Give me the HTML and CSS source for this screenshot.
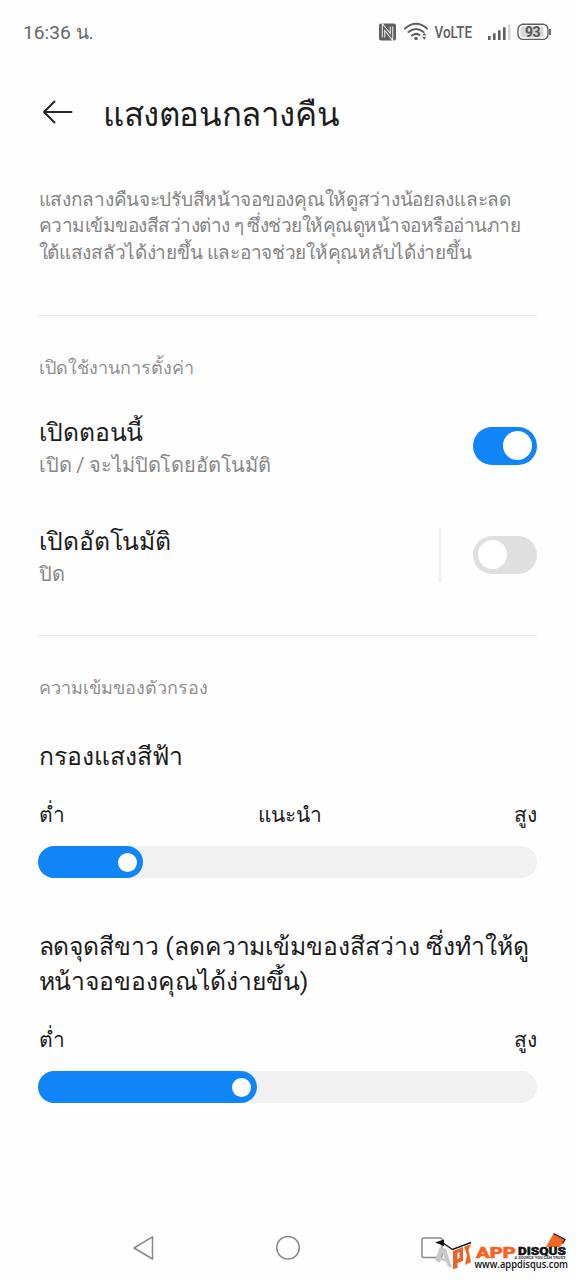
FILE: index.html
```
<!DOCTYPE html>
<html lang="th">
<head>
<meta charset="utf-8">
<title>แสงตอนกลางคืน</title>
<link rel="stylesheet" href="styles.css">
</head>
<body>
<div class="status">
  <span class="clock">16:36 น.</span>
  <svg class="status-icons" width="176" height="24" viewBox="0 0 176 24">
    <rect x="3" y="3.500" width="17" height="17" rx="2" fill="#606060"/>
    <path d="M7.500 17.500V7L15.500 17V6.500" fill="none" stroke="#fff" stroke-width="3.400"/>
    <path d="M7.500 18.500V7L15.500 17V5.500" fill="none" stroke="#606060" stroke-width="1.600"/>
    <g fill="none" stroke="#606060" stroke-width="2" stroke-linecap="round">
      <path d="M29 8.500Q40 -1 51 8.500M32.500 12Q40 6 47.500 12M36 15.500Q40 12.500 43.500 15"/>
    </g>
    <circle cx="40" cy="18.500" r="1.800" fill="#606060"/>
    <path d="M46.300 15.500L48.300 12.800L50.300 15.500ZM46.300 17L48.300 19.700L50.300 17Z" fill="#606060"/>
    <text class="volte" x="58.500" y="18" textLength="37.500" lengthAdjust="spacingAndGlyphs">VoLTE</text>
    <g fill="#606060"><rect x="112" y="16" width="2.600" height="4"/><rect x="117" y="13.300" width="2.600" height="6.700"/><rect x="122" y="10.300" width="2.600" height="9.700"/><rect x="127" y="7.300" width="2.600" height="12.700"/></g>
    <rect x="132" y="4.500" width="2.600" height="15.500" fill="#d4d4d4"/>
    <rect x="142" y="4.200" width="30" height="15.200" rx="5" fill="none" stroke="#606060" stroke-width="1.400"/>
    <rect x="144.500" y="6.500" width="23" height="10.600" rx="2" fill="#d6d6d6"/>
    <path d="M174 9v6" stroke="#606060" stroke-width="1.800"/>
    <text class="battery" x="149" y="16.800" textLength="15.500">93</text>
  </svg>
</div>
<header class="header">
  <svg width="32" height="26" viewBox="0 0 32 26" fill="none" stroke="#262626" stroke-width="2" stroke-linecap="round" stroke-linejoin="round"><path d="M29.500 12H2.500M12.500 1.500L2 12L12.500 22.500"/></svg>
  <h1>แสงตอนกลางคืน</h1>
</header>
<main>
  <p class="desc"><span>แสงกลางคืนจะปรับสีหน้าจอของคุณให้ดูสว่างน้อยลงและลด</span><span class="tight">ความเข้มของสีสว่างต่าง ๆ ซึ่งช่วยให้คุณดูหน้าจอหรืออ่านภาย</span><span>ใต้แสงสลัวได้ง่ายขึ้น และอาจช่วยให้คุณหลับได้ง่ายขึ้น</span></p>
  <section>
    <h2>เปิดใช้งานการตั้งค่า</h2>
    <div class="row">
      <div class="info"><h3>เปิดตอนนี้</h3><p>เปิด / จะไม่ปิดโดยอัตโนมัติ</p></div>
      <span class="toggle on"></span>
    </div>
    <div class="row">
      <div class="info"><h3>เปิดอัตโนมัติ</h3><p>ปิด</p></div>
      <span class="bar"></span>
      <span class="toggle"></span>
    </div>
  </section>
  <section class="filters">
    <h2>ความเข้มของตัวกรอง</h2>
    <h3 class="blue-title">กรองแสงสีฟ้า</h3>
    <div class="scale"><span>ต่ำ</span><span>แนะนำ</span><span>สูง</span></div>
    <div class="slider"><div class="fill" style="width:105px"></div></div>
    <h3 class="white-title">ลดจุดสีขาว (ลดความเข้มของสีสว่าง ซึ่งทำให้ดู<br>หน้าจอของคุณได้ง่ายขึ้น)</h3>
    <div class="scale"><span>ต่ำ</span><span>สูง</span></div>
    <div class="slider"><div class="fill" style="width:219px"></div></div>
  </section>
</main>
<nav class="nav">
  <svg width="576" height="60" viewBox="0 1220 576 60">
    <g fill="none" stroke="#888" stroke-width="1.500" stroke-linejoin="round">
      <path d="M134 1248L152.500 1236.800V1259Z"/>
      <circle cx="288" cy="1247.800" r="11.300"/>
      <rect x="422" y="1238" width="20" height="19.500" rx="2"/>
    </g>
    <path d="M435 1242.500L444 1239.500V1246Z" fill="#111"/>
    <path d="M443 1243L452.500 1249.500L471 1242.500" fill="none" stroke="#111" stroke-width="1.400"/>
    <path d="M440 1247L446 1249L452 1268L447.500 1266L446.500 1262L441 1260L439.500 1262.500L435 1260ZM442.500 1253L441 1257.500L445 1259Z" fill="#c8c8c8" fill-rule="evenodd"/>
    <path d="M453 1251L463 1247V1261L457.500 1263V1268L453 1269ZM457.500 1253V1259L459.500 1258V1252Z" fill="#e8642a" fill-rule="evenodd"/>
    <path d="M464 1247L471 1244L468.500 1250L471 1262L465 1265L467 1255Z" fill="#f26522"/>
    <path d="M553.500 1233.500L565 1239.500L560 1247H546Z" fill="#f26522"/>
    <path d="M553.500 1233.500L565 1239.500L562.500 1243.500" fill="none" stroke="#222" stroke-width="1.400"/>
    <text class="app" x="476" y="1257.500" textLength="40" lengthAdjust="spacingAndGlyphs">APP</text>
    <text class="disqus" x="518" y="1254.500" textLength="48" lengthAdjust="spacingAndGlyphs">DISQUS</text>
    <text class="tag" x="514.500" y="1258.800" textLength="51" lengthAdjust="spacingAndGlyphs">A SOURCE YOU CAN TRUST</text>
    <text class="www" x="474.500" y="1267.500" textLength="93.500" lengthAdjust="spacingAndGlyphs">www.appdisqus.com</text>
  </svg>
</nav>
</body>
</html>
```
FILE: styles.css
```
* { box-sizing: border-box; margin: 0; padding: 0; }
body { width: 576px; height: 1280px; background: #fefefe; font-family: Roboto, "Noto Sans", sans-serif; color: #1c1c1c; display: flex; flex-direction: column; overflow: hidden; }
h1, h2, h3 { font-weight: 400; white-space: nowrap; }
.status { height: 64px; display: flex; justify-content: space-between; align-items: center; padding: 0 24px 0 23px; color: #666; }
.clock { font-size: 19.2px; }
.volte { font-size: 16px; font-weight: 500; fill: #606060; }
.battery { font-size: 14px; font-weight: 700; fill: #555; }
.header { height: 98px; display: flex; align-items: center; gap: 29px; padding-left: 42px; }
h1 { font-size: 33px; letter-spacing: -0.4px; line-height: 40px; padding-top: 3px; }
main { padding: 0 39px 0 38px; }
.desc { padding-top: 25px; height: 154px; font-size: 19px; line-height: 26.300px; letter-spacing: -0.28px; color: #858585; white-space: nowrap; border-bottom: 1px solid #e8e8e8; }
.desc span { display: block; padding-left: 0.5px; }
.desc .tight { letter-spacing: -0.5px; }
h2 { font-size: 18px; line-height: 24px; padding-left: 1px; color: #909090; }
section { height: 320px; padding-top: 40px; border-bottom: 1px solid #e8e8e8; }
.filters { border: 0; height: auto; }
.row { display: flex; align-items: center; height: 109px; }
.row:first-of-type { margin-top: 11px; }
.info { flex: 1; padding: 4px 0 0 1px; }
h3 { font-size: 24.700px; line-height: 34px; letter-spacing: -0.1px; }
.info p { font-size: 20px; line-height: 30px; letter-spacing: -0.15px; color: #888; }
.bar { width: 2px; height: 54px; background: #eee; margin-right: 32px; }
.toggle { width: 64px; height: 38px; border-radius: 19px; background: #dfdfdf; display: flex; align-items: center; padding: 0 5px; }
.toggle::after { content: ""; width: 29px; height: 29px; border-radius: 50%; background: #fff; }
.toggle.on { background: #1085f7; justify-content: flex-end; }
.blue-title { margin-top: 40px; padding-left: 1px; letter-spacing: 0; }
.scale { display: flex; justify-content: space-between; font-size: 21px; line-height: 30px; margin-top: 26px; padding-left: 1px; }
.scale span:nth-child(2):not(:last-child) { letter-spacing: -0.4px; }
.slider { margin-top: 16px; height: 32px; border-radius: 16px; background: #f1f1f1; }
.fill { height: 32px; border-radius: 16px; background: #1085f7; display: flex; align-items: center; justify-content: flex-end; padding-right: 6px; }
.fill::after { content: ""; width: 19px; height: 19px; border-radius: 50%; background: #fff; }
.white-title { margin-top: 52px; line-height: 34.500px; letter-spacing: -0.04px; padding-left: 0.5px; }
.nav { margin-top: auto; height: 60px; }
.nav svg { display: block; }
.app { font: 900 14px Roboto, sans-serif; fill: #f26522; stroke: #f26522; stroke-width: 0.5px; }
.disqus { font: 900 10.500px Roboto, sans-serif; fill: #111; stroke: #111; stroke-width: 0.4px; }
.tag { font: 700 3.600px Roboto, sans-serif; fill: #333; }
.www { font: 600 10.500px "Open Sans", sans-serif; fill: #111; }
```
